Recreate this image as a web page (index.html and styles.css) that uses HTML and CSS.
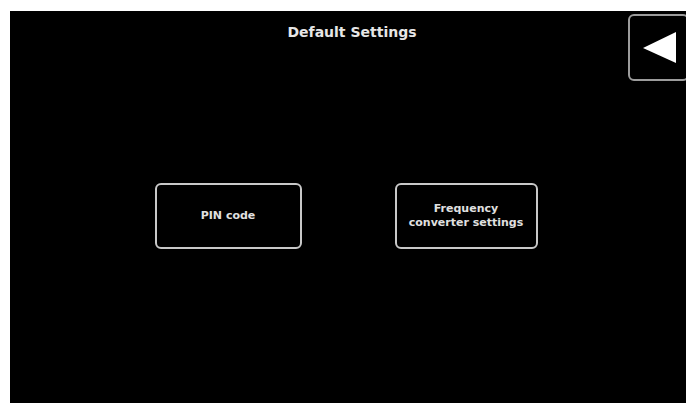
FILE: index.html
```html
<!DOCTYPE html>
<html lang="en">
<head>
  <meta charset="UTF-8" />
  <meta name="viewport" content="width=device-width, initial-scale=1.0"/>
  <title>Default Settings</title>
  <link rel="stylesheet" href="styles.css">
</head>
<body>
  <div class="screen">
    <div class="header">
      <div class="title">Default Settings</div>
      <button class="back" aria-label="Back">
        <svg width="57" height="62" viewBox="0 0 57 62">
          <polygon points="13,31 46,15 46,46" fill="#ffffff" />
        </svg>
      </button>
    </div>

    <div class="options">
      <button class="option">PIN code</button>
      <button class="option">Frequency<br />converter settings</button>
    </div>
  </div>
</body>
</html>
```

FILE: styles.css
```css
body {
  margin: 0;
  background: #ffffff;
  font-family: 'DejaVu Sans', Verdana, sans-serif;
}

.screen {
  margin: 11px 0 0 10px;
  width: 676px;
  height: 392px;
  background: #000000;
  overflow: hidden;
  display: flex;
  flex-direction: column;
}

.header {
  display: grid;
  grid-template-columns: 1fr auto 1fr;
  padding-top: 3px;
}

.title {
  grid-column: 2;
  padding-top: 10px;
  color: #e6e6e6;
  font-size: 14px;
  font-weight: bold;
  margin-left: 8px;
}

.back {
  grid-column: 3;
  justify-self: end;
  width: 61px;
  height: 67px;
  margin-right: -3px;
  padding: 0;
  background: #000000;
  border: 2px solid #9c9c9c;
  border-radius: 6px;
  cursor: pointer;
}

.back svg {
  display: block;
}

.options {
  display: flex;
  justify-content: center;
  gap: 93px;
  margin-top: 102px;
  margin-left: -4px;
}

.option {
  width: 147px;
  height: 66px;
  padding: 0;
  background: #000000;
  color: #e0e0e0;
  font-family: 'DejaVu Sans', Verdana, sans-serif;
  font-size: 11px;
  font-weight: bold;
  line-height: 14px;
  border: 2px solid #c8c8c8;
  border-radius: 6px;
  cursor: pointer;
}

.option + .option {
  width: 143px;
}
```
